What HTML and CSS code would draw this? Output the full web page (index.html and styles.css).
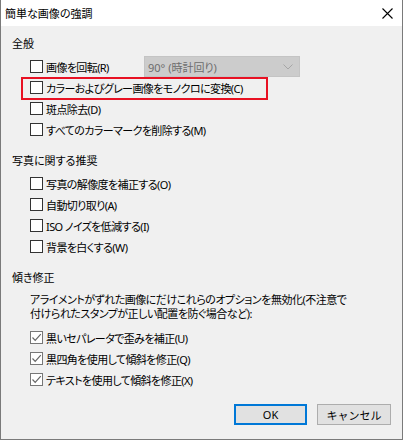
FILE: index.html
```html
<!DOCTYPE html>
<html lang="ja">
<head>
  <meta charset="UTF-8">
  <title>簡単な画像の強調</title>
  <link rel="stylesheet" href="styles.css">
</head>
<body>

  <div class="window">
    <div class="titlebar">
      <span class="title">簡単な画像の強調</span>
      <svg class="close" width="11" height="11" viewBox="0 0 11 11">
        <path d="M0.5 0.5 L10.5 10.5 M10.5 0.5 L0.5 10.5" stroke="#000" stroke-width="1.1" fill="none"/>
      </svg>
    </div>

    <div class="content">
      <div class="group-title">全般</div>
      <div class="row">
        <label class="check rotate-label"><span class="box"></span>画像を回転(R)</label>
        <div class="select">
          <span>90° (時計回り)</span>
          <svg width="10" height="6" viewBox="0 0 10 6">
            <path d="M0.5 0.5 L5 5 L9.5 0.5" stroke="#a6a6a6" stroke-width="1" fill="none"/>
          </svg>
        </div>
      </div>
      <div class="row marked">
        <label class="check"><span class="box"></span>カラーおよびグレー画像をモノクロに変換(C)</label>
      </div>
      <div class="row">
        <label class="check"><span class="box"></span>斑点除去(D)</label>
      </div>
      <div class="row">
        <label class="check"><span class="box"></span>すべてのカラーマークを削除する(M)</label>
      </div>

      <div class="group-title spaced">写真に関する推奨</div>
      <div class="row">
        <label class="check"><span class="box"></span>写真の解像度を補正する(O)</label>
      </div>
      <div class="row">
        <label class="check"><span class="box"></span>自動切り取り(A)</label>
      </div>
      <div class="row">
        <label class="check"><span class="box"></span>ISO ノイズを低減する(I)</label>
      </div>
      <div class="row">
        <label class="check"><span class="box"></span>背景を白くする(W)</label>
      </div>

      <div class="group-title spaced">傾き修正</div>
      <p class="note">アライメントがずれた画像にだけこれらのオプションを無効化(不注意で<br>付けられたスタンプが正しい配置を防ぐ場合など):</p>
      <div class="row first">
        <label class="check checked"><span class="box"><svg width="11" height="11" viewBox="0 0 11 11"><path d="M1.5 5.5 L4.2 8.3 L9.8 2.2" stroke="#666" stroke-width="1.2" fill="none"/></svg></span>黒いセパレータで歪みを補正(U)</label>
      </div>
      <div class="row">
        <label class="check checked"><span class="box"><svg width="11" height="11" viewBox="0 0 11 11"><path d="M1.5 5.5 L4.2 8.3 L9.8 2.2" stroke="#666" stroke-width="1.2" fill="none"/></svg></span>黒四角を使用して傾斜を修正(Q)</label>
      </div>
      <div class="row">
        <label class="check checked"><span class="box"><svg width="11" height="11" viewBox="0 0 11 11"><path d="M1.5 5.5 L4.2 8.3 L9.8 2.2" stroke="#666" stroke-width="1.2" fill="none"/></svg></span>テキストを使用して傾斜を修正(X)</label>
      </div>

      <div class="buttons">
        <button class="btn default">OK</button>
        <button class="btn">キャンセル</button>
      </div>
    </div>
  </div>

</body>
</html>
```

FILE: styles.css
```css
body {
  margin: 0;
  font-family: "Noto Sans", "Noto Sans CJK JP", sans-serif;
  font-size: 11px;
  color: #000;
  background: #fff;
}

/* ウィンドウ全体 */
.window {
  width: 403px;
  height: 440px;
  box-sizing: border-box;
  border: 1px solid #7a7a7a;
  border-top: none;
  background: #f0f0f0;
  display: flex;
  flex-direction: column;
  font-feature-settings: "palt";
}

.titlebar {
  height: 26px;
  background: #fff;
  display: flex;
  align-items: center;
  justify-content: space-between;
  padding: 0 9px 0 4px;
}

.title {
  font-size: 11px;
}

.content {
  flex: 1;
  display: flex;
  flex-direction: column;
  padding: 9px 11px 14px 11px;
}

.group-title {
  height: 18px;
  line-height: 18px;
  margin-bottom: 3px;
}

.group-title.spaced {
  margin-top: 12px;
}

.row {
  height: 21px;
  display: flex;
  align-items: center;
  padding-left: 18px;
}

.row.first {
  margin-top: 6px;
}

.check {
  display: flex;
  align-items: center;
  white-space: nowrap;
  letter-spacing: -0.6px;
}

.box {
  width: 13px;
  height: 13px;
  box-sizing: border-box;
  border: 1px solid #333;
  background: #fff;
  margin-right: 3px;
  display: flex;
  align-items: center;
  justify-content: center;
  flex-shrink: 0;
}

.checked .box {
  border-color: #777;
}

.rotate-label {
  width: 114px;
}

.select {
  width: 156px;
  height: 21px;
  box-sizing: border-box;
  background: #cccccc;
  border: 1px solid #c4c4c4;
  display: flex;
  align-items: center;
  justify-content: space-between;
  padding: 0 6px 0 3px;
  color: #6d6d6d;
}

/* 赤い強調枠 */
.marked {
  position: relative;
}

.marked::after {
  content: '';
  position: absolute;
  left: 9px;
  top: 0;
  width: 247px;
  height: 23px;
  box-sizing: border-box;
  border: 2px solid #e81123;
}

.note {
  margin: 3px 0 0 18px;
  line-height: 14px;
  letter-spacing: -0.5px;
}

.buttons {
  margin-top: auto;
  display: flex;
  justify-content: flex-end;
  gap: 10px;
}

.btn {
  width: 74px;
  height: 21px;
  box-sizing: border-box;
  background: #e1e1e1;
  border: 1px solid #adadad;
  font-family: inherit;
  font-size: 11px;
  padding: 0;
  color: #000;
}

.btn.default {
  width: 73px;
  border: 2px solid #0078d7;
}
```
